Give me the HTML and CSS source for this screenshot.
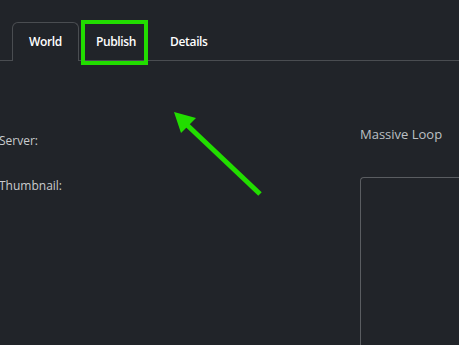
FILE: index.html
```html
<!DOCTYPE html>
<html>
<head>
<meta charset="utf-8">
<link rel="stylesheet" href="styles.css">
</head>
<body>
<div class="page">
  <nav class="tabs">
    <div class="tab active">World</div>
    <div class="tab">Publish</div>
    <div class="tab">Details</div>
  </nav>
  <div class="content">
    <div class="fields">
      <div class="field">Server:</div>
      <div class="field">Thumbnail:</div>
    </div>
    <div class="preview">
      <div class="preview-title">Massive Loop</div>
      <div class="preview-frame"></div>
    </div>
  </div>
  <div class="highlight"></div>
  <svg class="arrow" width="459" height="345" viewBox="0 0 459 345">
    <line x1="260" y1="194" x2="186" y2="124" stroke="#22dd00" stroke-width="5"/>
    <polygon points="174,112 181,133 196,118" fill="#22dd00"/>
  </svg>
</div>
</body>
</html>
```
FILE: styles.css
```css
html, body {
  margin: 0;
  padding: 0;
  background: #212429;
}
.page {
  position: relative;
  width: 459px;
  height: 345px;
  overflow: hidden;
  font-family: "Open Sans", "Noto Sans", sans-serif;
}
.tabs {
  display: flex;
  align-items: flex-start;
  padding: 22px 0 0 12px;
  border-bottom: 1px solid #4a4d51;
}
.tab {
  padding: 0 16px;
  border: 1px solid transparent;
  border-bottom: none;
  color: #ffffff;
  font-size: 12px;
  font-weight: 600;
  letter-spacing: -0.35px;
  line-height: 37px;
  height: 37px;
}
.tab.active {
  border-color: #4a4d51;
  border-radius: 6px 6px 0 0;
  background: #212429;
  height: 38px;
  margin-bottom: -1px;
  position: relative;
}
.content {
  display: flex;
}
.fields {
  width: 361px;
  margin-left: -1px;
  padding-top: 71px;
  display: flex;
  flex-direction: column;
  gap: 28px;
}
.field {
  color: #caccce;
  font-size: 12px;
  line-height: 17px;
  font-weight: 500;
}
.preview {
  flex: 1;
  padding-top: 64px;
}
.preview-title {
  color: #bcc0c4;
  font-size: 13px;
  line-height: 18px;
  margin-bottom: 34px;
}
.preview-frame {
  height: 220px;
  border: 1px solid #5a5d61;
  border-right: none;
  border-radius: 4px 0 0 0;
}
.highlight {
  position: absolute;
  left: 81px;
  top: 20px;
  width: 59px;
  height: 37px;
  border: 4px solid #22dd00;
}
.arrow {
  position: absolute;
  left: 0;
  top: 0;
}
```
